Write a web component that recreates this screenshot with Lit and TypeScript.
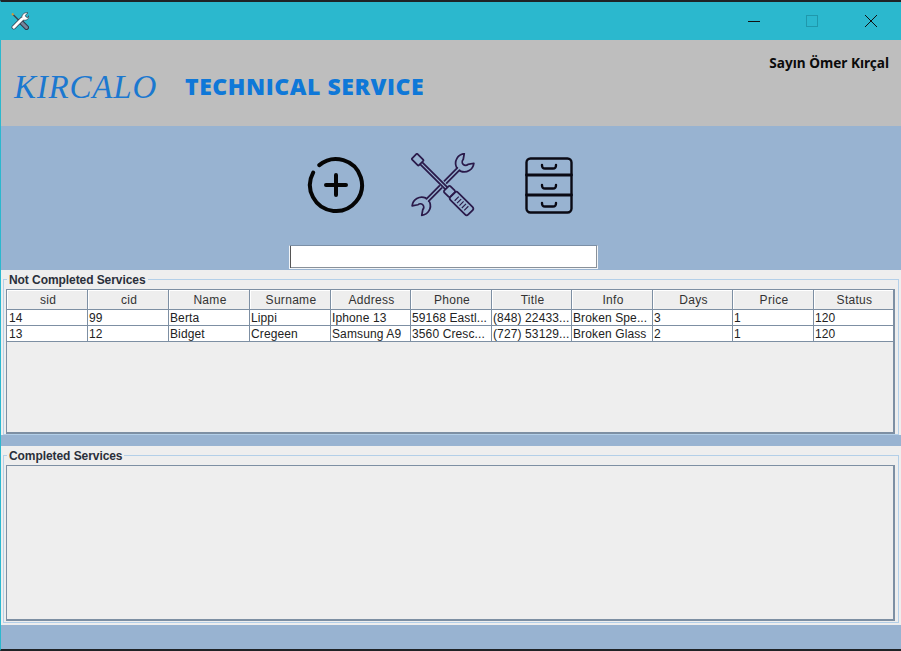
import { LitElement, html, css } from 'lit';
import { customElement } from 'lit/decorators.js';

const COLUMNS = ['sid', 'cid', 'Name', 'Surname', 'Address', 'Phone', 'Title', 'Info', 'Days', 'Price', 'Status'];

const ROWS = [
  ['14', '99', 'Berta', 'Lippi', 'Iphone 13', '59168 Eastl...', '(848) 22433...', 'Broken Spe...', '3', '1', '120'],
  ['13', '12', 'Bidget', 'Cregeen', 'Samsung A9', '3560 Cresc...', '(727) 53129...', 'Broken Glass', '2', '1', '120'],
];

@customElement('app-root')
export class AppRoot extends LitElement {
  static styles = css`
    :host {
      display: flex;
      flex-direction: column;
      width: 901px;
      height: 651px;
      box-sizing: border-box;
      overflow: hidden;
      border-top: 2px solid #1f2326;
      border-bottom: 2px solid #1f2326;
      border-left: 1px solid #2bb8ce;
      background: #98b3d1;
      font-family: 'Liberation Sans', Arial, sans-serif;
    }

    /* === Window title bar === */
    .titlebar {
      display: flex;
      align-items: center;
      height: 38px;
      flex-shrink: 0;
      padding-left: 10px;
      background: #2bb8ce;
    }
    .app-icon { width: 18px; height: 18px; }
    .win-buttons { display: flex; margin-left: auto; padding-right: 1px; }
    .win-btn { display: flex; width: 58.5px; height: 38px; align-items: center; justify-content: center; }

    /* === Brand header === */
    .header {
      display: flex;
      height: 86px;
      flex-shrink: 0;
      padding-left: 13px;
      box-sizing: border-box;
      background: #bebebe;
    }
    .logo {
      width: 171px;
      margin-top: 25px;
      font: italic 33px/44px 'Liberation Serif', serif;
      letter-spacing: 0.8px;
      color: #1b78d0;
    }
    .title {
      margin-top: 31px;
      font: 800 23px/30px 'Open Sans', sans-serif;
      letter-spacing: 0.55px;
      color: #0f78d8;
    }
    .user {
      margin-left: auto;
      padding: 14px 12px 0 0;
      font: 700 13.6px/18px 'Noto Sans', sans-serif;
      color: #0b0b0b;
    }

    /* === Toolbar with big icons and search box === */
    .tools {
      display: flex;
      flex-direction: column;
      align-items: center;
      height: 144px;
      flex-shrink: 0;
      box-sizing: border-box;
      padding-top: 24px;
    }
    .tool-row { display: flex; align-items: center; height: 70px; margin-right: 22px; gap: 46px; }
    .cabinet { margin-left: 4px; }
    .search {
      width: 309px;
      height: 24px;
      margin: 25px 15px 0 0;
      padding: 0;
      box-sizing: border-box;
      border: 1px solid;
      border-color: #7b8fa6 #f2f5f8 #f2f5f8 #f2f5f8;
      box-shadow: inset 1px 0 0 #555, inset -1px -1px 0 #8a9199;
      background: #fff;
    }

    /* === Titled panels === */
    .panel {
      flex-shrink: 0;
      box-sizing: border-box;
      padding: 9px 2px 0 2px;
      background: #eeeeee;
    }
    .panel.first { height: 165px; }
    .panel.second { height: 179px; margin-top: 11px; padding-bottom: 2px; }
    .group {
      position: relative;
      height: 100%;
      box-sizing: border-box;
      padding: 9px 3px 0 2px;
      border: 1px solid #b3cfe8;
    }
    .panel.second .group { padding-bottom: 1px; }
    .legend {
      position: absolute;
      top: -7px;
      left: 3px;
      padding: 0 2px;
      background: #eeeeee;
      font: 700 12px/15px 'Liberation Sans', Arial, sans-serif;
      letter-spacing: -0.07px;
      color: #2a2f3a;
    }
    .scroll {
      height: 100%;
      box-sizing: border-box;
      border: 1px solid #7d8fa3;
      border-right-width: 2px;
      border-bottom-width: 2px;
    }

    /* === Table === */
    .table {
      display: grid;
      grid-template-columns: 81px 81px 81px 81px 80px 81px 80px 81px 80px 81px 80px;
      font-size: 12px;
      color: #222;
    }
    .th {
      height: 20px;
      box-sizing: border-box;
      padding-left: 2px;
      border-right: 1px solid #7d8fa3;
      border-bottom: 1px solid #7d8fa3;
      box-shadow: inset 1px 1px 0 #fff;
      line-height: 21px;
      letter-spacing: 0.3px;
      text-align: center;
      color: #333;
    }
    .td {
      height: 16px;
      box-sizing: border-box;
      padding-left: 1px;
      border-right: 1px solid #7d8fa3;
      border-bottom: 1px solid #7d8fa3;
      background: #fff;
      line-height: 17px;
      letter-spacing: 0.12px;
      white-space: nowrap;
      overflow: hidden;
      color: #222;
    }
    .td:nth-child(11n + 1) { padding-left: 2px; }
  `;

  private renderAppIcon() {
    return html`<svg class="app-icon" viewBox="0 0 18 18" fill="none">
      <path d="M2 2.500L9 9.500" stroke="#3c4250" stroke-width="1.400"/>
      <path d="M1 1.500L2.500 3" stroke="#d09a3a" stroke-width="2"/>
      <path d="M9.500 9.500L15.500 15.500" stroke="#2f3644" stroke-width="5" stroke-linecap="round"/>
      <path d="M9.500 9.500L15.500 15.500" stroke="#74849c" stroke-width="3" stroke-linecap="round"/>
      <path d="M2.800 15.200L11 7" stroke="#2f3644" stroke-width="4.400" stroke-linecap="round"/>
      <path d="M11 7C10 3 13 0 17 0.800L14.300 3.300L15 5L17 5.500L18 3.500C18.500 7 15 9 12 8L11 7Z" fill="#fff" stroke="#2f3644" stroke-width=".7"/>
      <path d="M2.800 15.200L11 7" stroke="#fff" stroke-width="3" stroke-linecap="round"/>
    </svg>`;
  }

  private renderAdd() {
    return html`<svg width="58" height="58" viewBox="0 0 58 58" fill="none" stroke="#050505" stroke-width="4" stroke-linecap="round">
      <path d="M12.300 9.100A26 26 0 1 1 6.150 16.600"/>
      <path d="M29 19v20M19 29h20"/>
    </svg>`;
  }

  private renderTools() {
    // half of the wrench, drawn from the crossing out to its jaw, used twice
    const wrenchHalf = 'M3 -1.600L22.500 -1.600L22.500 -3A10 10 0 0 1 38 -7L33 -3.500A3.500 3.500 0 0 0 33 3.500L38 7A10 10 0 0 1 22.500 3L22.500 1.600L3 1.600';
    return html`<svg width="64" height="64" viewBox="0 0 66 66" fill="none" stroke="#2a1a4a" stroke-width="1.800" stroke-linejoin="round">
      <g transform="translate(33 32.500) rotate(-45)">
        <path d=${wrenchHalf}/>
        <path d=${wrenchHalf} transform="rotate(180)"/>
      </g>
      <g transform="translate(33 33) rotate(45)">
        <rect x="-42" y="-4" width="10" height="8" rx="1"/>
        <path d="M-32 -1.500L5 -1.500M-32 1.500L5 1.500"/>
        <rect x="5" y="-4.500" width="9" height="9" rx="1.500"/>
        <rect x="14" y="-5.500" width="26" height="11" rx="2.500"/>
        <path d="M20 -3V3M23.500 -3V3M27 -3V3M30.500 -3V3M34 -3V3" stroke-width="1.200"/>
      </g>
    </svg>`;
  }

  private renderCabinet() {
    return html`<svg class="cabinet" width="48" height="57" viewBox="0 0 48 57" fill="none" stroke="#0a0a14" stroke-width="2.400" stroke-linecap="round">
      <rect x="1.500" y="1.500" width="45" height="54" rx="4"/>
      <path d="M1.500 18h45M1.500 38h45" stroke-width="2.800"/>
      <path d="M17 8c0 3 1 3.500 3 3.500h8c2 0 3-.5 3-3.500M17 28c0 3 1 3.500 3 3.500h8c2 0 3-.5 3-3.500M17 46c0 3 1 3.500 3 3.500h8c2 0 3-.5 3-3.500"/>
    </svg>`;
  }

  render() {
    return html`
      <div class="titlebar">
        ${this.renderAppIcon()}
        <div class="win-buttons">
          <div class="win-btn"><svg width="12" height="12"><path d="M0 6.500h12" stroke="#111"/></svg></div>
          <div class="win-btn"><svg width="12" height="12"><rect x=".5" y=".5" width="11" height="11" fill="none" stroke="#1f98ac"/></svg></div>
          <div class="win-btn"><svg width="12" height="12"><path d="M0 0l12 12M12 0L0 12" stroke="#111" fill="none"/></svg></div>
        </div>
      </div>
      <div class="header">
        <div class="logo">KIRCALO</div>
        <div class="title">TECHNICAL SERVICE</div>
        <div class="user">Sayın Ömer Kırçal</div>
      </div>
      <div class="tools">
        <div class="tool-row">
          ${this.renderAdd()} ${this.renderTools()} ${this.renderCabinet()}
        </div>
        <input class="search" />
      </div>
      <div class="panel first">
        <div class="group">
          <div class="legend">Not Completed Services</div>
          <div class="scroll">
            <div class="table">
              ${COLUMNS.map((c) => html`<div class="th">${c}</div>`)}
              ${ROWS.map((r) => r.map((v) => html`<div class="td">${v}</div>`))}
            </div>
          </div>
        </div>
      </div>
      <div class="panel second">
        <div class="group">
          <div class="legend">Completed Services</div>
          <div class="scroll"></div>
        </div>
      </div>
    `;
  }
}
